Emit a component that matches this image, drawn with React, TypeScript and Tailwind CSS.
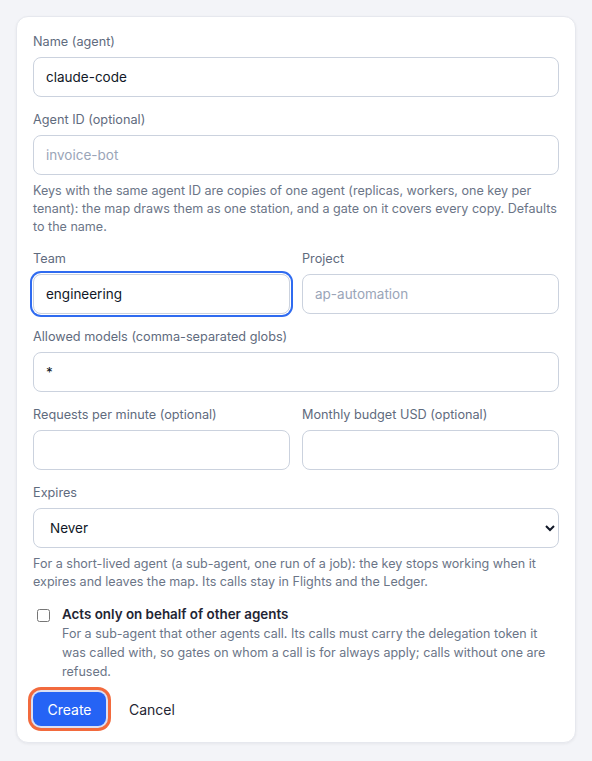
import React from "react";

const inputCls =
  "block w-full h-10 rounded-lg border border-[#cbd2de] bg-white px-3 text-[13.5px] text-[#111827] placeholder:text-[#9aa5b8] outline-none";

function Label({ children }: { children: React.ReactNode }) {
  return <label className="block mb-1.5 text-[12.7px] leading-[18px] text-[#5f6b7e]">{children}</label>;
}

function Help({ children }: { children: React.ReactNode }) {
  return <p className="mt-[7px] text-[12.55px] leading-[18px] text-[#6b7587]">{children}</p>;
}

export default function App() {
  return (
    <div className="min-h-screen bg-[#f3f4f8] p-4" style={{ fontFamily: "Inter, 'Noto Sans', sans-serif" }}>
      <div className="rounded-xl border border-[#e6e8ee] bg-white p-4 shadow-[0_1px_3px_rgba(16,24,40,0.06)]">
        <form className="flex flex-col gap-3.5" onSubmit={(e) => e.preventDefault()}>
          <div>
            <Label>Name (agent)</Label>
            <input className={inputCls} defaultValue="claude-code" />
          </div>
          <div>
            <Label>Agent ID (optional)</Label>
            <input className={inputCls} placeholder="invoice-bot" />
            <Help>
              Keys with the same agent ID are copies of one agent (replicas, workers, one key per tenant): the map draws them as one station, and a gate on it covers every copy. Defaults to the name.
            </Help>
          </div>
          <div className="grid grid-cols-2 gap-3">
            <div>
              <Label>Team</Label>
              <input
                className={inputCls + " border-[#2f6bf0] ring-2 ring-[#2f6bf0] ring-offset-1 ring-offset-white"}
                defaultValue="engineering"
              />
            </div>
            <div>
              <Label>Project</Label>
              <input className={inputCls} placeholder="ap-automation" />
            </div>
          </div>
          <div>
            <Label>Allowed models (comma-separated globs)</Label>
            <input className={inputCls} defaultValue="*" />
          </div>
          <div className="grid grid-cols-2 gap-3">
            <div>
              <Label>Requests per minute (optional)</Label>
              <input className={inputCls} />
            </div>
            <div>
              <Label>Monthly budget USD (optional)</Label>
              <input className={inputCls} />
            </div>
          </div>
          <div>
            <Label>Expires</Label>
            <select className={inputCls} defaultValue="never">
              <option value="never">Never</option>
              <option value="1h">1 hour</option>
              <option value="1d">1 day</option>
            </select>
            <Help>
              For a short-lived agent (a sub-agent, one run of a job): the key stops working when it expires and leaves the map. Its calls stay in Flights and the Ledger.
            </Help>
          </div>
          <div className="flex items-start">
            <input type="checkbox" className="mt-[3.5px] ml-1 mr-3 h-[13px] w-[13px] shrink-0" />
            <div>
              <div className="text-[13.4px] leading-[19px] font-semibold text-[#1f2533]">Acts only on behalf of other agents</div>
              <p className="text-[12.5px] leading-[19px] text-[#6b7587]">
                For a sub-agent that other agents call. Its calls must carry the delegation token it was called with, so gates on whom a call is for always apply; calls without one are refused.
              </p>
            </div>
          </div>
          <div className="-mt-[3px] flex items-center gap-[23px]">
            <button
              type="submit"
              className="h-[34px] w-[73px] rounded-lg bg-[#2563f5] text-[14px] text-white ring-[3px] ring-[#f26a3d] ring-offset-2 ring-offset-[#dcdff2]"
            >
              Create
            </button>
            <button type="button" className="text-[14px] text-[#1f2533]">
              Cancel
            </button>
          </div>
        </form>
      </div>
    </div>
  );
}
